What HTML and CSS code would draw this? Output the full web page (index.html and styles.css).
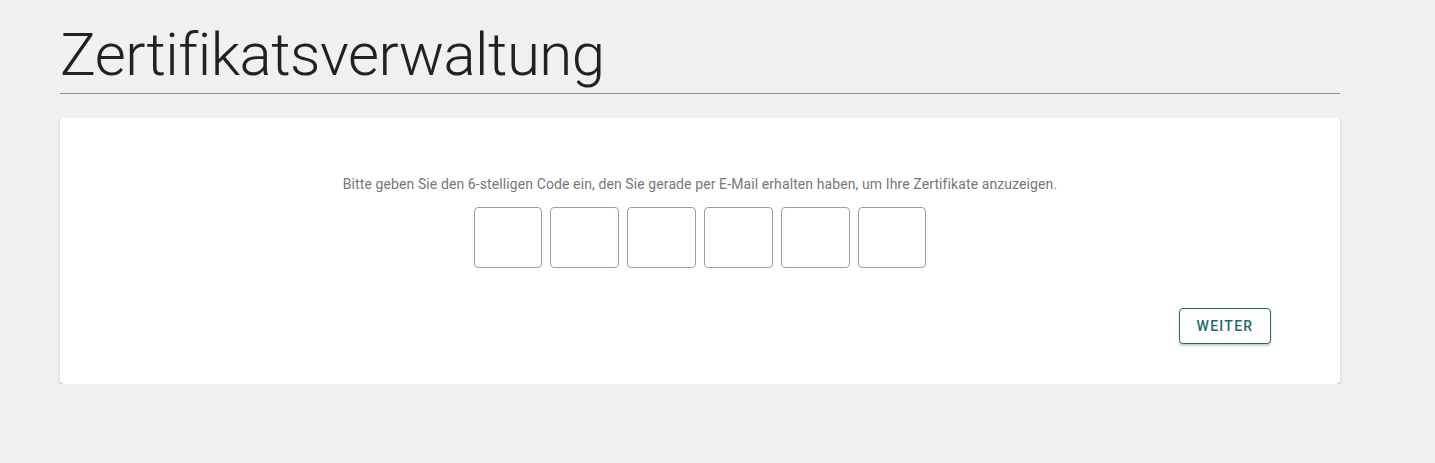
FILE: index.html
```html
<!DOCTYPE html>
<html lang="de">
<head>
  <meta charset="UTF-8">
  <title>Zertifikatsverwaltung</title>
  <link rel="stylesheet" href="styles.css">
</head>
<body>
  <div class="page">
    <h1 class="title">Zertifikatsverwaltung</h1>
    <div class="card">
      <p class="hint">Bitte geben Sie den 6-stelligen Code ein, den Sie gerade per E-Mail erhalten haben, um Ihre Zertifikate anzuzeigen.</p>
      <div class="code">
        <input type="text" maxlength="1" class="digit">
        <input type="text" maxlength="1" class="digit">
        <input type="text" maxlength="1" class="digit">
        <input type="text" maxlength="1" class="digit">
        <input type="text" maxlength="1" class="digit">
        <input type="text" maxlength="1" class="digit">
      </div>
      <div class="actions">
        <button class="next">Weiter</button>
      </div>
    </div>
  </div>
</body>
</html>
```
FILE: styles.css
```css
body {
  margin: 0;
  background: #f0f0f0;
  font-family: Roboto, 'Liberation Sans', sans-serif;
  color: #212121;
}
.page {
  width: 1280px;
  margin-left: 60px;
}
.title {
  font-size: 60px;
  font-weight: 300;
  line-height: 72px;
  margin: 0;
  padding-top: 19px;
  padding-bottom: 2px;
  border-bottom: 1px solid #8e8e8e;
  letter-spacing: -0.5px;
}
.card {
  margin-top: 24px;
  background: #fff;
  border-radius: 4px;
  box-shadow: 0 2px 1px -1px rgba(0,0,0,.2), 0 1px 1px 0 rgba(0,0,0,.14), 0 1px 3px 0 rgba(0,0,0,.12);
  padding: 57px 69px 40px;
  text-align: center;
}
.hint {
  margin: 0 0 14px;
  font-size: 14px;
  line-height: 18px;
  letter-spacing: 0.1px;
  color: #777;
}
.code {
  display: flex;
  justify-content: center;
  gap: 8px;
}
.digit {
  width: 68.8px;
  height: 61px;
  box-sizing: border-box;
  border: 1px solid #9e9e9e;
  border-radius: 4px;
  font-size: 24px;
  text-align: center;
  padding: 0;
}
.actions {
  display: flex;
  justify-content: flex-end;
  margin-top: 40px;
}
.next {
  width: 92px;
  height: 36px;
  background: #fff;
  border: 1px solid #1d6b6e;
  border-radius: 4px;
  color: #1d6b6e;
  font-family: Roboto, 'Liberation Sans', sans-serif;
  font-size: 14px;
  font-weight: 500;
  letter-spacing: 1.25px;
  text-transform: uppercase;
  box-shadow: 0 2px 2px rgba(0,0,0,.2);
  cursor: pointer;
}
```
